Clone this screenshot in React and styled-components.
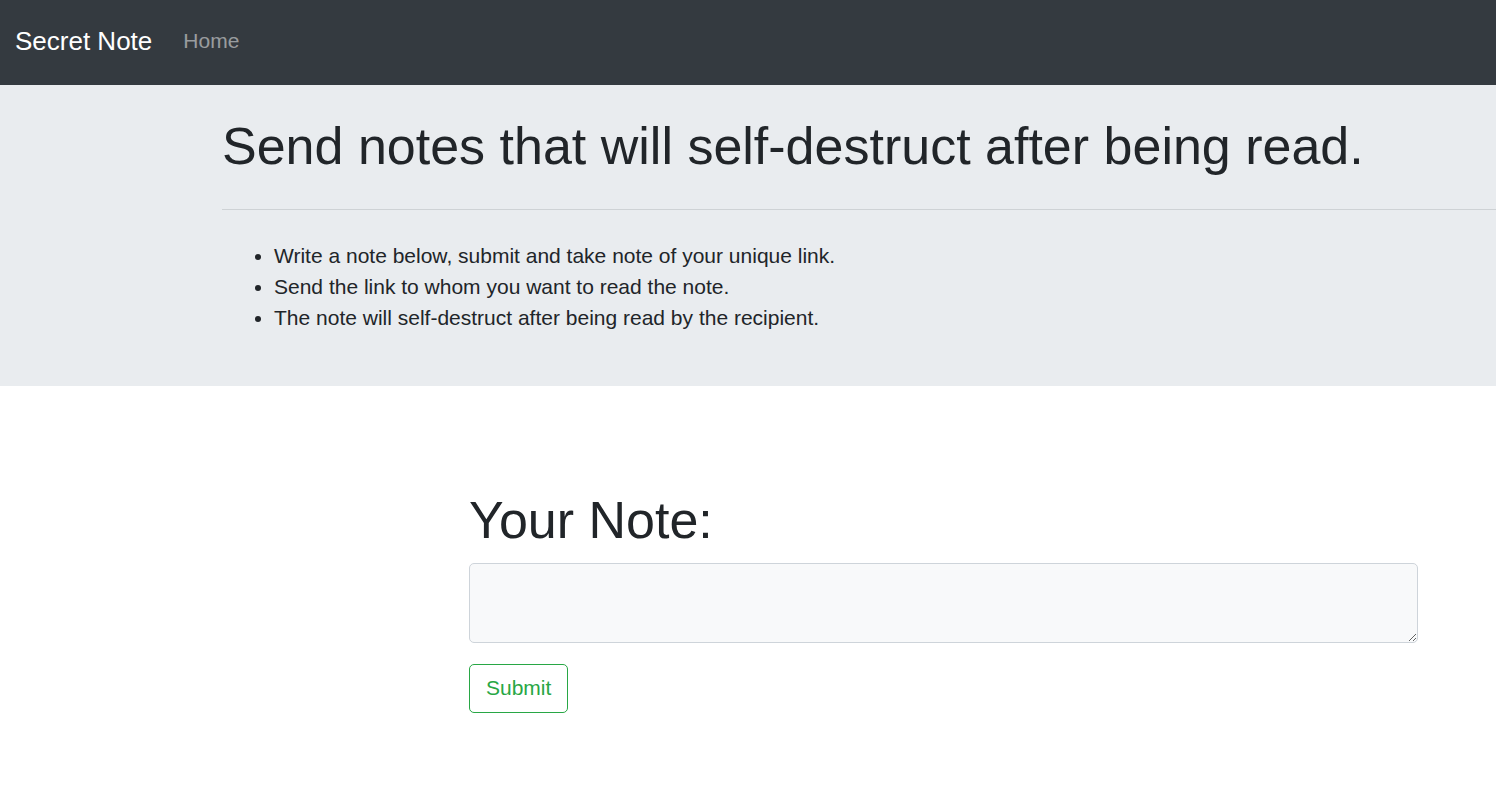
import React from "react";
import styled, { createGlobalStyle } from "styled-components";

const GlobalStyle = createGlobalStyle`
  *, *::before, *::after { box-sizing: border-box; }
  body {
    margin: 0;
    background: #fff;
    color: #212529;
    font-family: "Liberation Sans", Arial, sans-serif;
    font-size: 21px;
    line-height: 31px;
  }
`;

const Navbar = styled.nav`
  display: flex;
  align-items: center;
  gap: 21px;
  padding: 16px 15px 20px;
  background: #343a40;
`;

const Brand = styled.a`
  color: #fff;
  font-size: 26px;
  line-height: 40px;
  text-decoration: none;
`;

const NavLink = styled.a`
  padding: 9px 10px;
  color: rgba(255, 255, 255, 0.5);
  text-decoration: none;
`;

const Hero = styled.header`
  padding: 30px 0 53px 222px;
  background: #e9ecef;
`;

const Title = styled.h1`
  margin: 0;
  font-size: 52px;
  font-weight: 400;
  line-height: 62px;
`;

const Divider = styled.hr`
  margin: 32px 0 30px;
  border: 0;
  border-top: 1px solid #ced2d5;
`;

const Steps = styled.ul`
  margin: 0;
  padding-left: 52px;
`;

const NoteForm = styled.form`
  padding: 103px 78px 74px 469px;
`;

const NoteLabel = styled.label`
  display: block;
  margin-bottom: 12px;
  font-size: 52px;
  line-height: 62px;
`;

const NoteInput = styled.textarea`
  display: block;
  width: 100%;
  height: 80px;
  margin-bottom: 21px;
  padding: 8px 16px;
  border: 1px solid #ced4da;
  border-radius: 5px;
  background: #f8f9fa;
  color: #495057;
  font: inherit;
  resize: vertical;
`;

const SubmitButton = styled.button`
  display: block;
  padding: 7px 16px 9px;
  border: 1px solid #28a745;
  border-radius: 5px;
  background: transparent;
  color: #28a745;
  font: inherit;
  cursor: pointer;
`;

const steps = [
  "Write a note below, submit and take note of your unique link.",
  "Send the link to whom you want to read the note.",
  "The note will self-destruct after being read by the recipient.",
];

export default function App() {
  return (
    <>
      <GlobalStyle />
      <Navbar>
        <Brand href="#">Secret Note</Brand>
        <NavLink href="#">Home</NavLink>
      </Navbar>
      <main>
        <Hero>
          <Title>Send notes that will self-destruct after being read.</Title>
          <Divider />
          <Steps>
            {steps.map((step) => (
              <li key={step}>{step}</li>
            ))}
          </Steps>
        </Hero>
        <NoteForm onSubmit={(event) => event.preventDefault()}>
          <NoteLabel htmlFor="note">Your Note:</NoteLabel>
          <NoteInput id="note" name="note" />
          <SubmitButton type="submit">Submit</SubmitButton>
        </NoteForm>
      </main>
    </>
  );
}
